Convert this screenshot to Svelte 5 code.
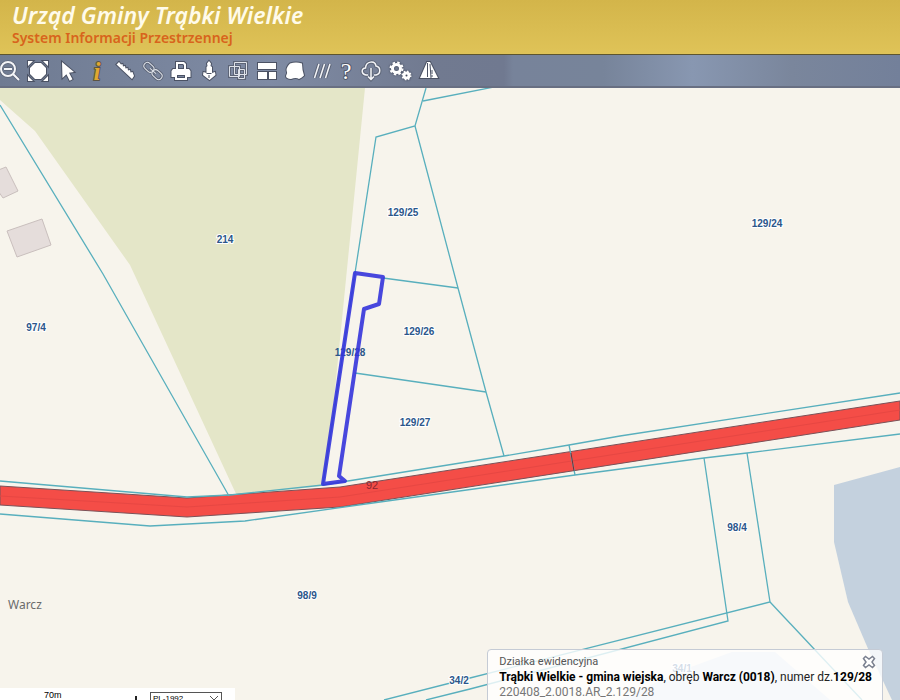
<script lang="ts">
	type Label = { text: string; x: number; y: number };

	let projection = $state('PL-1992');
	let active = $state('info');
	let infoOpen = $state(true);

	const tools = [
		{ id: 'zoom-out', title: 'Pomniejsz', width: 20 },
		{ id: 'extent', title: 'Cały zasięg', width: 22 },
		{ id: 'select', title: 'Wybierz', width: 22 },
		{ id: 'info', title: 'Informacja', width: 20 },
		{ id: 'measure', title: 'Pomiar', width: 20 },
		{ id: 'link', title: 'Odnośnik', width: 20 },
		{ id: 'print', title: 'Drukuj', width: 20 },
		{ id: 'locate', title: 'Lokalizacja', width: 20 },
		{ id: 'compare', title: 'Porównaj', width: 22 },
		{ id: 'layout', title: 'Układ okien', width: 20 },
		{ id: 'area', title: 'Obszar', width: 20 },
		{ id: 'lines', title: 'Linie', width: 18 },
		{ id: 'help', title: 'Pomoc', width: 14 },
		{ id: 'download', title: 'Pobierz', width: 20 },
		{ id: 'settings', title: 'Ustawienia', width: 22 },
		{ id: 'north', title: 'Orientacja', width: 20 }
	];

	const parcels: Label[] = [
		{ text: '214', x: 225, y: 243 },
		{ text: '97/4', x: 36, y: 331 },
		{ text: '129/25', x: 403, y: 216 },
		{ text: '129/24', x: 767, y: 227 },
		{ text: '129/26', x: 419, y: 335 },
		{ text: '129/27', x: 415, y: 426 },
		{ text: '98/4', x: 737, y: 531 },
		{ text: '98/9', x: 307, y: 599 },
		{ text: '34/2', x: 459, y: 684 },
		{ text: '34/1', x: 682, y: 672 }
	];

	const boundaries = [
		'M0 105L103 274 229 496',
		'M426 88L415 126 376 137 355 273 323 484',
		'M423 101L494 87',
		'M415 126L458 288 486 392 504 456',
		'M383 278L458 288',
		'M355 373L486 392',
		'M0 481L187 497 230 495 323 485 504 456 569 445 620 436 900 393',
		'M0 514L150 526 245 521 380 502 575 475 704 458 747 453 900 434',
		'M569 445L575 475',
		'M704 458L728 621 470 689 426 700',
		'M747 453L770 602 470 678 384 700',
		'M770 602L862 700'
	];
</script>

<div class="app">
	<header class="banner">
		<h1>Urząd Gminy Trąbki Wielkie</h1>
		<p>System Informacji Przestrzennej</p>
	</header>

	<nav class="toolbar" aria-label="Narzędzia mapy">
		{#each tools as tool}
			<button
				type="button"
				title={tool.title}
				aria-label={tool.title}
				aria-pressed={active === tool.id}
				onclick={() => (active = tool.id)}
			>
				<svg width={tool.width} height="22" viewBox="0 0 {tool.width} 22">
					{#if tool.id === 'zoom-out'}
						<g class="shade"><circle cx="9" cy="9" r="7" /><path d="M14 14l6 6M5 9h8" /></g>
						<g class="line"><circle cx="9" cy="9" r="7" /><path d="M14 14l6 6M5 9h8" /></g>
					{:else if tool.id === 'extent'}
						<path class="fill" d="M1 1h5L1 6zM21 1v5l-5-5zM1 21v-5l5 5zM21 21h-5l5-5z" />
						<path class="fill" d="M8 3h6l5 5v6l-5 5H8l-5-5V8z" />
					{:else if tool.id === 'select'}
						<path class="fill" d="M5 2l12 10-5 .8 3.500 6.400-2.800 1.500-3.300-6.500L5.500 18z" />
					{:else if tool.id === 'info'}
						<text class="info-mark" x="10" y="20">i</text>
					{:else if tool.id === 'measure'}
						<path
							class="fill"
							d="M4 2l2 2.500 1.500-.5.5 2.500 2-.5.500 2.500 2-.5.500 2.500 2-.5.500 2.500 2-.5L19 16l-2 3L1.500 4.500z"
						/>
					{:else if tool.id === 'link'}
						<g class="shade thin" transform="rotate(42 10 11)">
							<rect x="-1" y="7.500" width="11" height="7" rx="3.500" />
							<rect x="10" y="7.500" width="11" height="7" rx="3.500" />
							<path d="M6 11h8" />
						</g>
						<g class="line thin" transform="rotate(42 10 11)">
							<rect x="-1" y="7.500" width="11" height="7" rx="3.500" />
							<rect x="10" y="7.500" width="11" height="7" rx="3.500" />
							<path d="M6 11h8" />
						</g>
					{:else if tool.id === 'print'}
						<path class="fill" fill-rule="evenodd" d="M5 2h8l2 2v5h3l1.500 2v6H16v3H4v-3H.5v-6L2 9h3zM7 4v5h6V5l-1-1zM6 15v3h8v-3z" />
					{:else if tool.id === 'locate'}
						<path class="fill" d="M10 1l2 2.500-.5 2.500 1.500 1v6l3-1 .5 3L10.500 20 4 15l.5-3 3 1V7l1-1L8 3.500z" />
						<path class="dark" d="M7.500 13.500h5M10 15v3" />
					{:else if tool.id === 'compare'}
						<path class="shade thin" d="M7.500 2.500h12v12h-12zM2.500 6.500h10v10h-10zM11.500 9.500h6v9h-6z" />
						<path class="line thin" d="M7.500 2.500h12v12h-12zM2.500 6.500h10v10h-10zM11.500 9.500h6v9h-6z" />
					{:else if tool.id === 'layout'}
						<path class="fill" d="M1 3h18v6H1zM1 12h9v7H1zM12 12h7v7h-7z" />
					{:else if tool.id === 'area'}
						<path class="fill" d="M5 3.500q6-2 12 0 0 6 2 12-2 2-5 3.500-3-2-8 0-5-.5-5-3 2-3 .5-6 0-3 3.500-6.500z" />
					{:else if tool.id === 'lines'}
						<path class="shade" d="M1.500 18L6 4M7 18l4.500-14M12.500 18L17 4" />
						<path class="slashes" d="M1.500 18L6 4M7 18l4.500-14M12.500 18L17 4" />
					{:else if tool.id === 'help'}
						<text class="help-mark" x="7" y="19">?</text>
					{:else if tool.id === 'download'}
						<path class="shade" d="M7 15H5C0 14 0 8 4.500 8 5 1 14 0 15 6c5 1 5 8 0 9h-2M10 8v11M7 16.500l3 3 3-3" />
						<path class="cloud" d="M7 15H5C0 14 0 8 4.500 8 5 1 14 0 15 6c5 1 5 8 0 9h-2M10 8v11M7 16.500l3 3 3-3" />
					{:else if tool.id === 'settings'}
						<g class="gear">
							<circle cx="7.500" cy="8.500" r="4" />
							<circle class="teeth" cx="7.500" cy="8.500" r="6" />
							<circle cx="17.500" cy="15.500" r="2.500" />
							<circle class="teeth small" cx="17.500" cy="15.500" r="4" />
						</g>
					{:else}
						<path class="fill" d="M8 2h3l8 16H1z" />
						<path class="dark" d="M8.500 3v14M11 4l1 14M13 10v4M13 15v2" />
					{/if}
				</svg>
			</button>
		{/each}
	</nav>

	<main class="map">
		<svg class="canvas" viewBox="0 88 900 612" preserveAspectRatio="xMinYMin slice" aria-label="Mapa działek">
			<path class="meadow" d="M0 88H365L330 440 322 486 237 496 130 265 35 131 0 100z" />
			<path class="water" d="M834 485L900 467V700H892L869 651 848 602 834 542z" />
			<path class="pond" d="M620 700L680 671 732 652H775L830 700z" />
			<path class="building" d="M-4 171L6 167 18 191 3 198-4 188z" />
			<path class="building" d="M7 231L42 219 51 245 17 257z" />

			<path class="road" d="M0 486L187 498 340 487 900 401V420L340 507 187 517 0 505z" />
			<path class="road-mid" d="M0 496L187 507 340 497 900 410" />

			{#each boundaries as d}
				<path class="boundary" {d} />
			{/each}
			<path class="road-cut" d="M571 453L574 471" />

			<text class="road-label" x="372" y="489">92</text>
			{#each parcels as parcel}
				<text class="parcel" x={parcel.x} y={parcel.y}>{parcel.text}</text>
			{/each}
			<text class="parcel picked" x="350" y="356">129/28</text>
			<path class="selection" d="M355 273L383 277 379 304 364 309 339 476 345 481 323 484z" />
			<text class="place" x="8" y="609">Warcz</text>
		</svg>

		<div class="status">
			<div class="scale"><span>70m</span></div>
			<select bind:value={projection} aria-label="Układ współrzędnych">
				<option>PL-1992</option>
				<option>PL-2000</option>
			</select>
		</div>

		{#if infoOpen}
			<section class="info">
				<div class="info-head">
					<span>Działka ewidencyjna</span>
					<button type="button" aria-label="Zamknij" onclick={() => (infoOpen = false)}>
						<svg width="14" height="14" viewBox="0 0 14 14">
							<path d="M1.500 3.500l2-2L7 4l3.500-2.500 2 2L10 7l2.500 3.500-2 2L7 10l-3.500 2.500-2-2L4 7z" />
						</svg>
					</button>
				</div>
				<p class="name">
					<b>Trąbki Wielkie - gmina wiejska</b>, obręb <b>Warcz (0018)</b>, numer dz.<b>129/28</b>
				</p>
				<p class="code">220408_2.0018.AR_2.129/28</p>
			</section>
		{/if}
	</main>
</div>

<style>
	:global(body) {
		margin: 0;
	}

	.app {
		display: flex;
		flex-direction: column;
		height: 100vh;
		font-family: 'Liberation Sans', Arial, sans-serif;
		overflow: hidden;
	}

	.banner {
		box-sizing: border-box;
		height: 55px;
		padding: 1px 12px 0;
		border-bottom: 1px solid #5d552e;
		background: linear-gradient(#d3b54a, #dfc358);
		font-family: 'Noto Sans', sans-serif;
	}

	.banner h1 {
		margin: 0;
		font-size: 23px;
		line-height: 28px;
		font-style: italic;
		font-weight: 600;
		color: #fffbea;
	}

	.banner p {
		margin: 0;
		font-size: 14px;
		line-height: 18px;
		font-weight: 600;
		color: #d8641c;
	}

	.toolbar {
		display: flex;
		align-items: center;
		gap: 8px;
		box-sizing: border-box;
		height: 33px;
		margin: 0;
		border-bottom: 2px solid #686f82;
		background: linear-gradient(
			90deg,
			#6f7b92,
			#7f8ba4 30%,
			#717a90 48%,
			#707990 56%,
			#77839a 57%,
			#77849a 67%,
			#8897b1 77%,
			#7a869c 88%,
			#73809a
		);
	}

	.toolbar button,
	.info button {
		display: flex;
		padding: 0;
		border: 0;
		background: none;
		cursor: pointer;
	}

	.toolbar button:first-child {
		margin-left: -1px;
	}

	.toolbar svg {
		overflow: visible;
	}

	.fill {
		fill: #fff;
		stroke: #4b5264;
		stroke-width: 2;
		paint-order: stroke;
	}

	.line,
	.slashes,
	.cloud,
	.shade {
		fill: none;
		stroke: #f4f5f8;
		stroke-width: 2;
	}

	.slashes,
	.cloud {
		stroke-width: 1.5;
	}

	.shade {
		stroke: #5d6577;
		stroke-width: 3.5;
	}

	.line.thin {
		stroke: #dfe3ea;
		stroke-width: 1;
	}

	.shade.thin {
		stroke-width: 3;
	}

	.dark {
		fill: none;
		stroke: #4b5264;
	}

	.info-mark,
	.help-mark {
		font-family: 'Liberation Serif', serif;
		font-size: 25px;
		font-weight: 700;
		font-style: italic;
		text-anchor: middle;
		fill: #e0a72f;
		stroke: #5b5443;
		stroke-width: 2;
		paint-order: stroke;
	}

	.help-mark {
		font-size: 24px;
		font-weight: 400;
		font-style: normal;
		fill: #fff;
		stroke: #505869;
	}

	.gear {
		fill: none;
		stroke: #fff;
		stroke-width: 3;
		filter: drop-shadow(0 0 1px #343b4c);
	}

	.gear .teeth {
		stroke-width: 2;
		stroke-dasharray: 2.5 2.212;
	}

	.gear .small {
		stroke-dasharray: 1.5 1.642;
	}

	.map {
		position: relative;
		flex: 1;
		min-height: 0;
		background: #f7f4ec;
		overflow: hidden;
	}

	.canvas {
		display: block;
		width: 100%;
		height: 100%;
	}

	.meadow {
		fill: #e4e6c8;
	}

	.water {
		fill: #c4d1de;
	}

	.pond {
		fill: #d6deea;
	}

	.building {
		fill: #e5dddb;
		stroke: #c9bfbd;
	}

	.road {
		fill: #f44d47;
		stroke: #7a5258;
	}

	.road-mid {
		fill: none;
		stroke: #e64743;
	}

	.boundary {
		fill: none;
		stroke: #58afbd;
		stroke-width: 1.3;
	}

	.road-cut {
		stroke: #7a2b30;
	}

	.selection {
		fill: none;
		stroke: #3434dc;
		stroke-opacity: 0.9;
		stroke-width: 4;
		stroke-linejoin: round;
	}

	.parcel,
	.road-label {
		font-size: 10px;
		font-weight: 700;
		text-anchor: middle;
		fill: #2b568a;
		stroke: #fff;
		stroke-width: 2;
		paint-order: stroke;
	}

	.picked {
		stroke: none;
	}

	.road-label {
		font-size: 11px;
		font-weight: 400;
		fill: #8b2730;
		stroke: none;
	}

	.place {
		font-family: 'Noto Sans', sans-serif;
		font-size: 12px;
		fill: #6b6b6b;
	}

	.status {
		position: absolute;
		left: 0;
		bottom: 0;
		display: flex;
		align-items: flex-start;
		gap: 13px;
		box-sizing: border-box;
		width: 235px;
		height: 12px;
		background: #fff;
		overflow: hidden;
	}

	.scale {
		display: flex;
		box-sizing: border-box;
		width: 137px;
		height: 12px;
		padding-left: 44px;
		background: linear-gradient(#222, #222) right 8px / 2px 12px no-repeat;
		font-size: 9px;
		line-height: 14px;
	}

	.status select {
		appearance: none;
		box-sizing: border-box;
		width: 72px;
		height: 14px;
		margin-top: 4px;
		padding: 0 2px;
		border: 1px solid #555;
		border-radius: 0;
		background:
			linear-gradient(45deg, transparent 45%, #555 45% 60%, transparent 60%) right 7px top 3px / 4px 4px no-repeat,
			linear-gradient(-45deg, transparent 45%, #555 45% 60%, transparent 60%) right 3px top 3px / 4px 4px no-repeat,
			#fff;
		font-family: inherit;
		font-size: 8px;
		line-height: 10px;
	}

	.info {
		position: absolute;
		right: 17px;
		bottom: -4px;
		box-sizing: border-box;
		padding: 4px 10px 3px 11px;
		border: 1px solid #c5cbd5;
		border-radius: 4px;
		background: rgba(255, 255, 255, 0.8);
		font-family: Roboto, 'Liberation Sans', sans-serif;
		font-size: 12px;
		line-height: 15px;
	}

	.info-head {
		display: flex;
		justify-content: space-between;
		align-items: center;
		font-size: 11px;
		color: #555;
	}

	.info-head button {
		margin-right: -4px;
	}

	.info-head path {
		fill: #fff;
		stroke: #7b8190;
		stroke-width: 1.5;
	}

	.info p {
		margin: 0;
	}

	.info .name {
		padding-top: 1px;
		color: #222;
	}

	.info b {
		color: #000;
	}

	.info .code {
		color: #777;
	}
</style>
